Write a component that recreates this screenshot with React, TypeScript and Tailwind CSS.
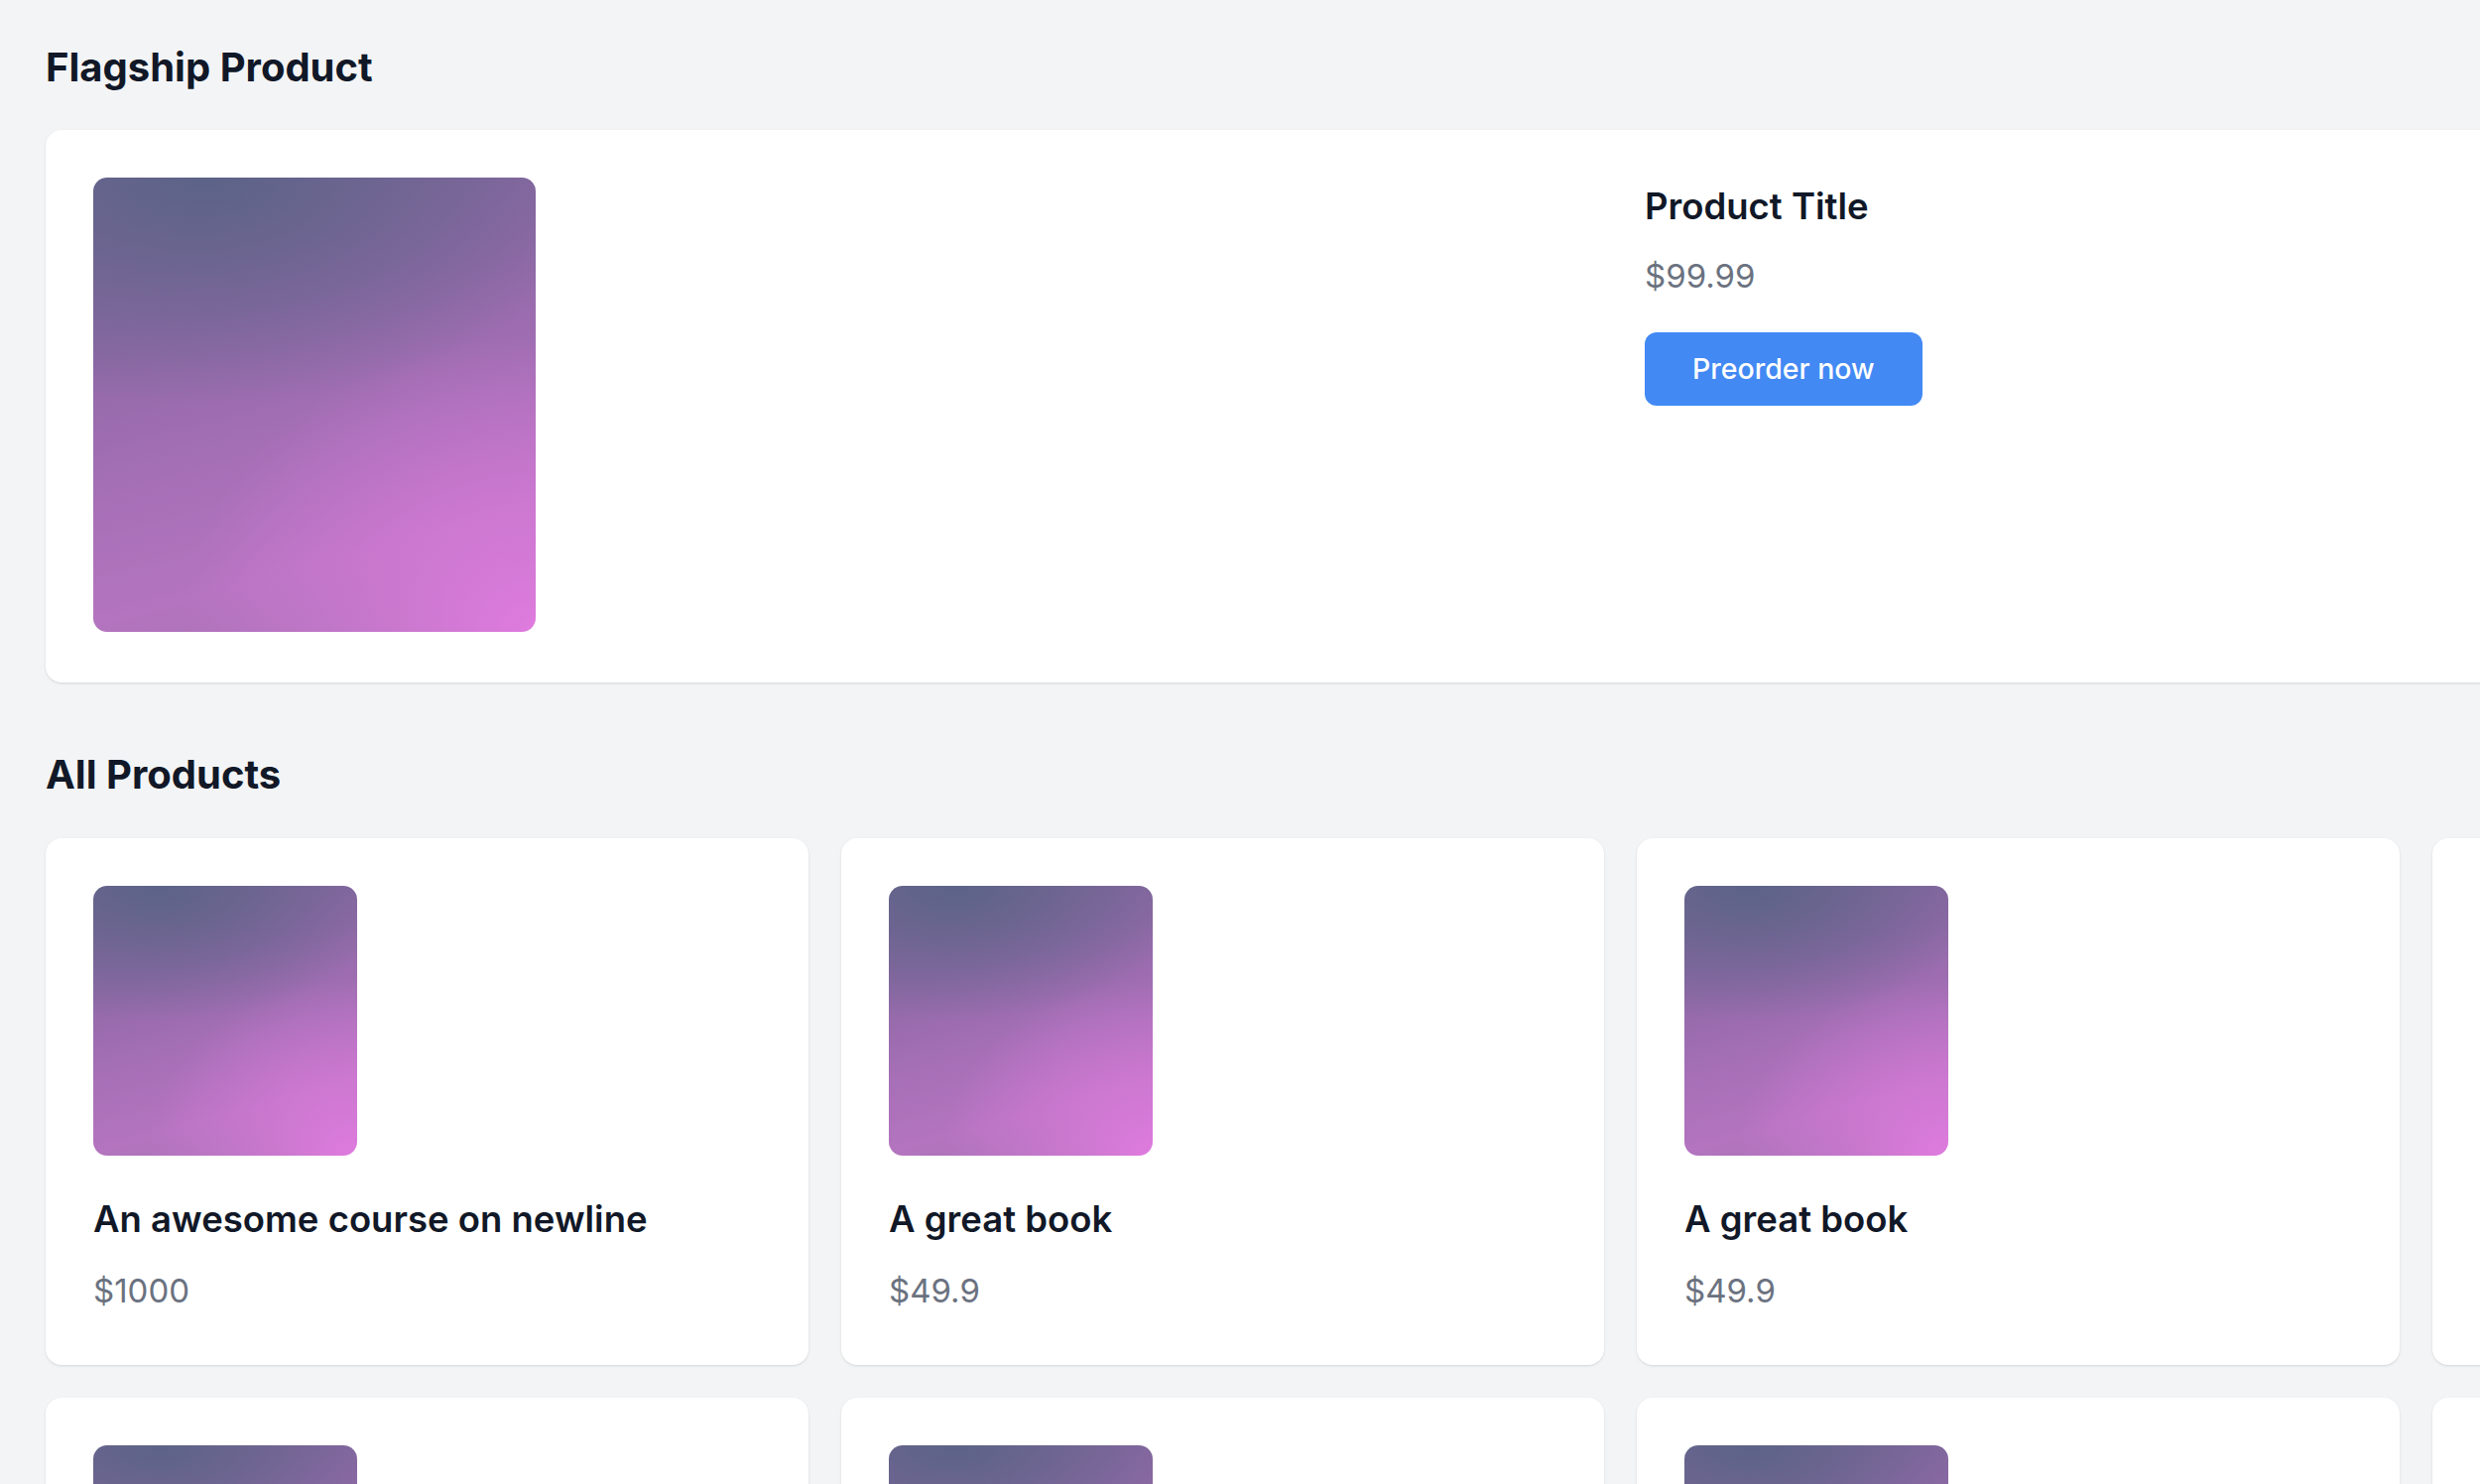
import React from 'react';

// mesh-like purple/pink placeholder used for every product picture
const cover =
  'bg-[radial-gradient(ellipse_80%_65%_at_100%_100%,#e07bdf_0%,rgba(224,123,223,0)_100%),radial-gradient(ellipse_90%_50%_at_25%_0%,#5c6387_0%,rgba(92,99,135,0)_100%),linear-gradient(165deg,#7c6699_0%,#8f69a6_30%,#a56fb6_55%,#b474bf_78%,#a173b0_100%)]';

const products = [
  { title: 'An awesome course on newline', price: '$1000' },
  { title: 'A great book', price: '$49.9' },
  { title: 'A great book', price: '$49.9' },
  { title: 'A great book', price: '$49.9' },
  { title: 'A great book', price: '$49.9' },
  { title: 'A great book', price: '$49.9' },
  { title: 'A great book', price: '$49.9' },
  { title: 'A great book', price: '$49.9' },
];

const ProductCard: React.FC<{ title: string; price: string }> = ({ title, price }) => (
  <div className="bg-white rounded-[16px] shadow-sm px-12 pt-12 pb-[50px]">
    <div className={`w-[266px] h-[272px] rounded-[14px] ${cover}`} />
    <h3 className="mt-[36px] text-[36.5px] leading-[57px] font-semibold text-[#111827]">{title}</h3>
    <p className="mt-[19px] text-[33px] leading-[49px] text-[#6b7280]">{price}</p>
  </div>
);

export default function App() {
  return (
    <div className="min-h-screen w-full overflow-hidden bg-[#f3f4f6] font-['Inter','Liberation_Sans',sans-serif]">
      <div className="w-[3175px] ml-[46px] pt-[39px]">
        <h2 className="text-[40px] leading-[57px] font-bold text-[#111827]">Flagship Product</h2>
        <div className="mt-[35px] bg-white rounded-[16px] shadow-sm px-12 pt-12 pb-[51px] grid grid-cols-2 gap-[49px]">
          <div className={`w-[446px] h-[458px] rounded-[14px] ${cover}`} />
          <div className="flex flex-col items-start pt-[1px]">
            <h3 className="text-[36.5px] leading-[57px] font-semibold text-[#111827]">Product Title</h3>
            <p className="mt-[17px] text-[33px] leading-[49px] text-[#6b7280]">$99.99</p>
            <button className="mt-[32px] h-[74px] px-[48px] rounded-[12px] bg-[#4289f4] text-white text-[28.5px] font-medium">
              Preorder now
            </button>
          </div>
        </div>

        <h2 className="mt-[64px] text-[40px] leading-[57px] font-bold text-[#111827]">All Products</h2>
        <div className="mt-[36px] grid grid-cols-4 gap-[33px]">
          {products.map((p, i) => (
            <ProductCard key={i} title={p.title} price={p.price} />
          ))}
        </div>
      </div>
    </div>
  );
}
